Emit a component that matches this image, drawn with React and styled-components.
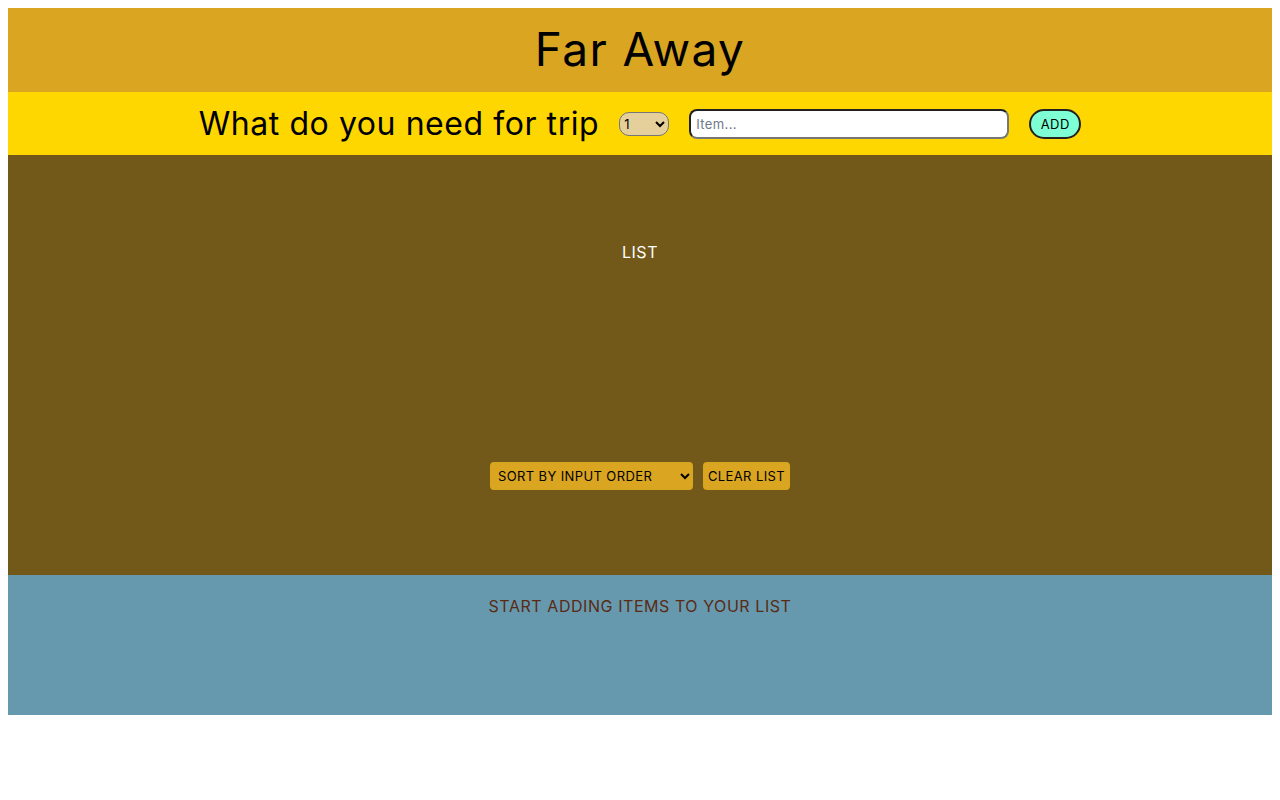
import styled, { createGlobalStyle } from "styled-components";

const GlobalStyle = createGlobalStyle`
  body {
    margin: 8px;
    font-family: Inter, "Noto Sans", sans-serif;
    letter-spacing: 0.035em;
  }
  input, select, button {
    font-family: Inter, "Noto Sans", sans-serif;
    letter-spacing: 0.03em;
  }
`;

const Page = styled.div`
  display: flex;
  flex-direction: column;
`;

const Header = styled.h1`
  margin: 0;
  height: 84px;
  box-sizing: border-box;
  padding-bottom: 3px;
  background: #daa520;
  display: flex;
  align-items: center;
  justify-content: center;
  font-size: 46px;
  font-weight: 400;
  letter-spacing: 0.03em;
  color: #000;
`;

const Form = styled.form`
  height: 63px;
  background: #ffd700;
  display: flex;
  align-items: center;
  justify-content: center;
  gap: 20px;
`;

const FormTitle = styled.h3`
  margin: 0;
  font-size: 32px;
  font-weight: 400;
`;

const QtySelect = styled.select`
  width: 50px;
  height: 24px;
  background: #e5d09b;
  border: 1px solid #767676;
  border-radius: 10px;
  font-size: 13px;
`;

const ItemInput = styled.input`
  width: 320px;
  height: 30px;
  box-sizing: border-box;
  border: 2px solid #222;
  border-right-color: #777;
  border-bottom-color: #777;
  border-radius: 8px;
  padding: 0 5px;
  font-size: 13px;

  &::placeholder {
    color: #6f7889;
  }
`;

const AddButton = styled.button`
  width: 52px;
  height: 30px;
  background: #7fffd4;
  border: 2px solid #222;
  border-radius: 15px;
  font-size: 13px;
  color: #000;
`;

const ListSection = styled.div`
  height: 420px;
  box-sizing: border-box;
  background: #725819;
  display: flex;
  flex-direction: column;
  align-items: center;
  padding-top: 85px;
`;

const ListTitle = styled.div`
  color: #fff;
  font-size: 16px;
  height: 24px;
  line-height: 24px;
`;

const Actions = styled.div`
  margin-top: 198px;
  display: flex;
  gap: 10px;
`;

const ActionSelect = styled.select`
  width: 203px;
  height: 28px;
  background: #daa520;
  border: none;
  border-radius: 4px;
  padding: 0 4px;
  font-size: 13px;
  color: #000;
`;

const ActionButton = styled.button`
  height: 28px;
  background: #daa520;
  border: none;
  border-radius: 4px;
  padding: 0 5px;
  font-size: 13px;
  color: #000;
`;

const Stats = styled.footer`
  height: 140px;
  box-sizing: border-box;
  background: #6699ae;
  color: #5a2a14;
  font-size: 16px;
  text-align: center;
  padding-top: 21px;
`;

export default function App() {
  return (
    <Page>
      <GlobalStyle />
      <Header>Far Away</Header>
      <Form onSubmit={(e) => e.preventDefault()}>
        <FormTitle>What do you need for trip</FormTitle>
        <QtySelect defaultValue="1">
          {Array.from({ length: 20 }, (_, i) => (
            <option key={i + 1} value={i + 1}>
              {i + 1}
            </option>
          ))}
        </QtySelect>
        <ItemInput type="text" placeholder="Item..." />
        <AddButton>ADD</AddButton>
      </Form>
      <ListSection>
        <ListTitle>LIST</ListTitle>
        <Actions>
          <ActionSelect defaultValue="input">
            <option value="input">SORT BY INPUT ORDER</option>
            <option value="description">SORT BY DESCRIPTION</option>
            <option value="packed">SORT BY PACKED STATUS</option>
          </ActionSelect>
          <ActionButton>CLEAR LIST</ActionButton>
        </Actions>
      </ListSection>
      <Stats>START ADDING ITEMS TO YOUR LIST</Stats>
    </Page>
  );
}
